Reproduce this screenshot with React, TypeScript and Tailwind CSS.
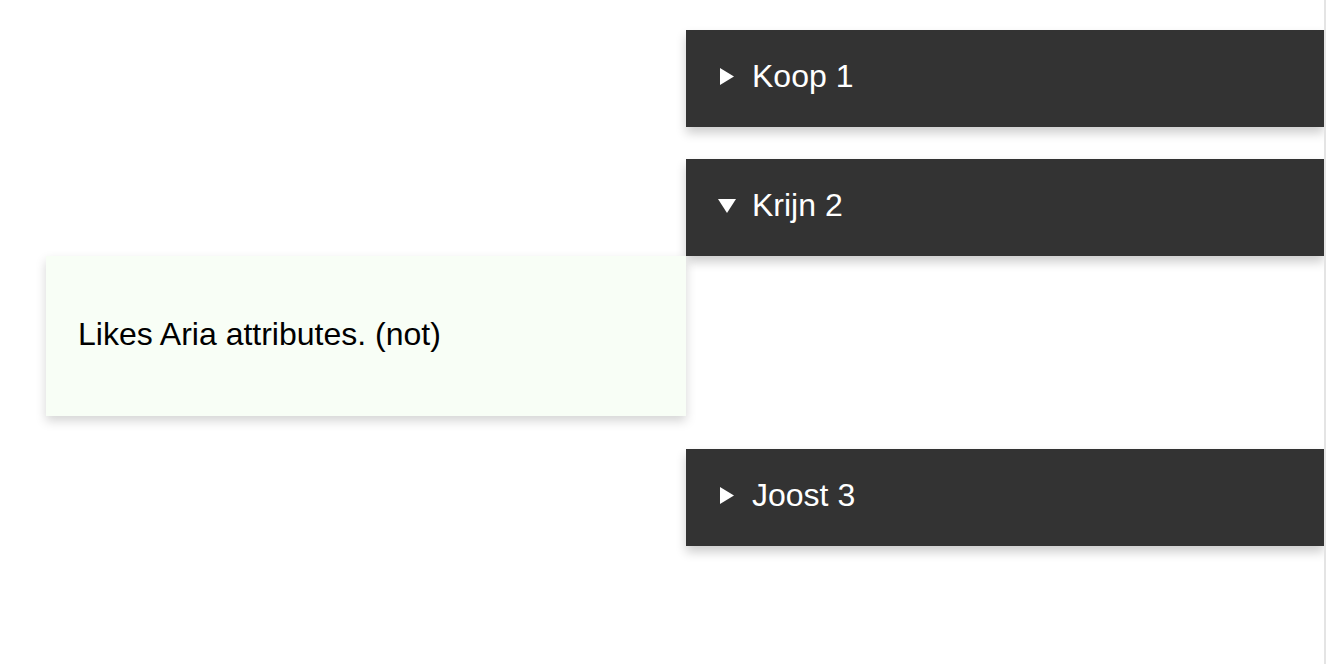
const people = [
  { name: 'Koop 1', open: false },
  { name: 'Krijn 2', open: true, text: 'Likes Aria attributes. (not)' },
  { name: 'Joost 3', open: false },
];

function Marker({ open }: { open: boolean }) {
  return open ? (
    <svg width="18" height="14" viewBox="0 0 18 14" className="shrink-0 mt-[2px]">
      <polygon points="0,0 18,0 9,14" fill="#ffffff" />
    </svg>
  ) : (
    <svg width="14" height="17" viewBox="0 0 14 17" className="shrink-0 ml-[2px] mr-[2px] mt-[2px]">
      <polygon points="0,0 14,8.5 0,17" fill="#ffffff" />
    </svg>
  );
}

export default function App() {
  return (
    <div className="flex min-h-[664px] bg-white font-['Liberation_Sans',Arial,sans-serif]">
      <div className="w-[1324px] pl-[46px] pt-[30px]">
        <div className="flex flex-col gap-[32px]">
          {people.map((p) => (
            <div key={p.name} className="flex flex-col">
              {/* Header bar */}
              <div className="ml-[640px] h-[97px] bg-[#333333] flex items-center pl-[32px] pb-[6px] shadow-[0_6px_10px_rgba(0,0,0,0.2)]">
                <Marker open={p.open} />
                <span className="ml-[16px] text-[32px] text-white leading-none">{p.name}</span>
              </div>

              {/* Open panel */}
              {p.open && (
                <div className="w-[640px] h-[160px] mb-[1px] bg-[#f8fef6] flex items-center px-[32px] pb-[4px] shadow-[0_5px_10px_rgba(0,0,0,0.17)]">
                  <p className="text-[32px] text-black leading-none">{p.text}</p>
                </div>
              )}
            </div>
          ))}
        </div>
      </div>
      <div className="w-[2px] bg-[#e4e4e4]" />
    </div>
  );
}
